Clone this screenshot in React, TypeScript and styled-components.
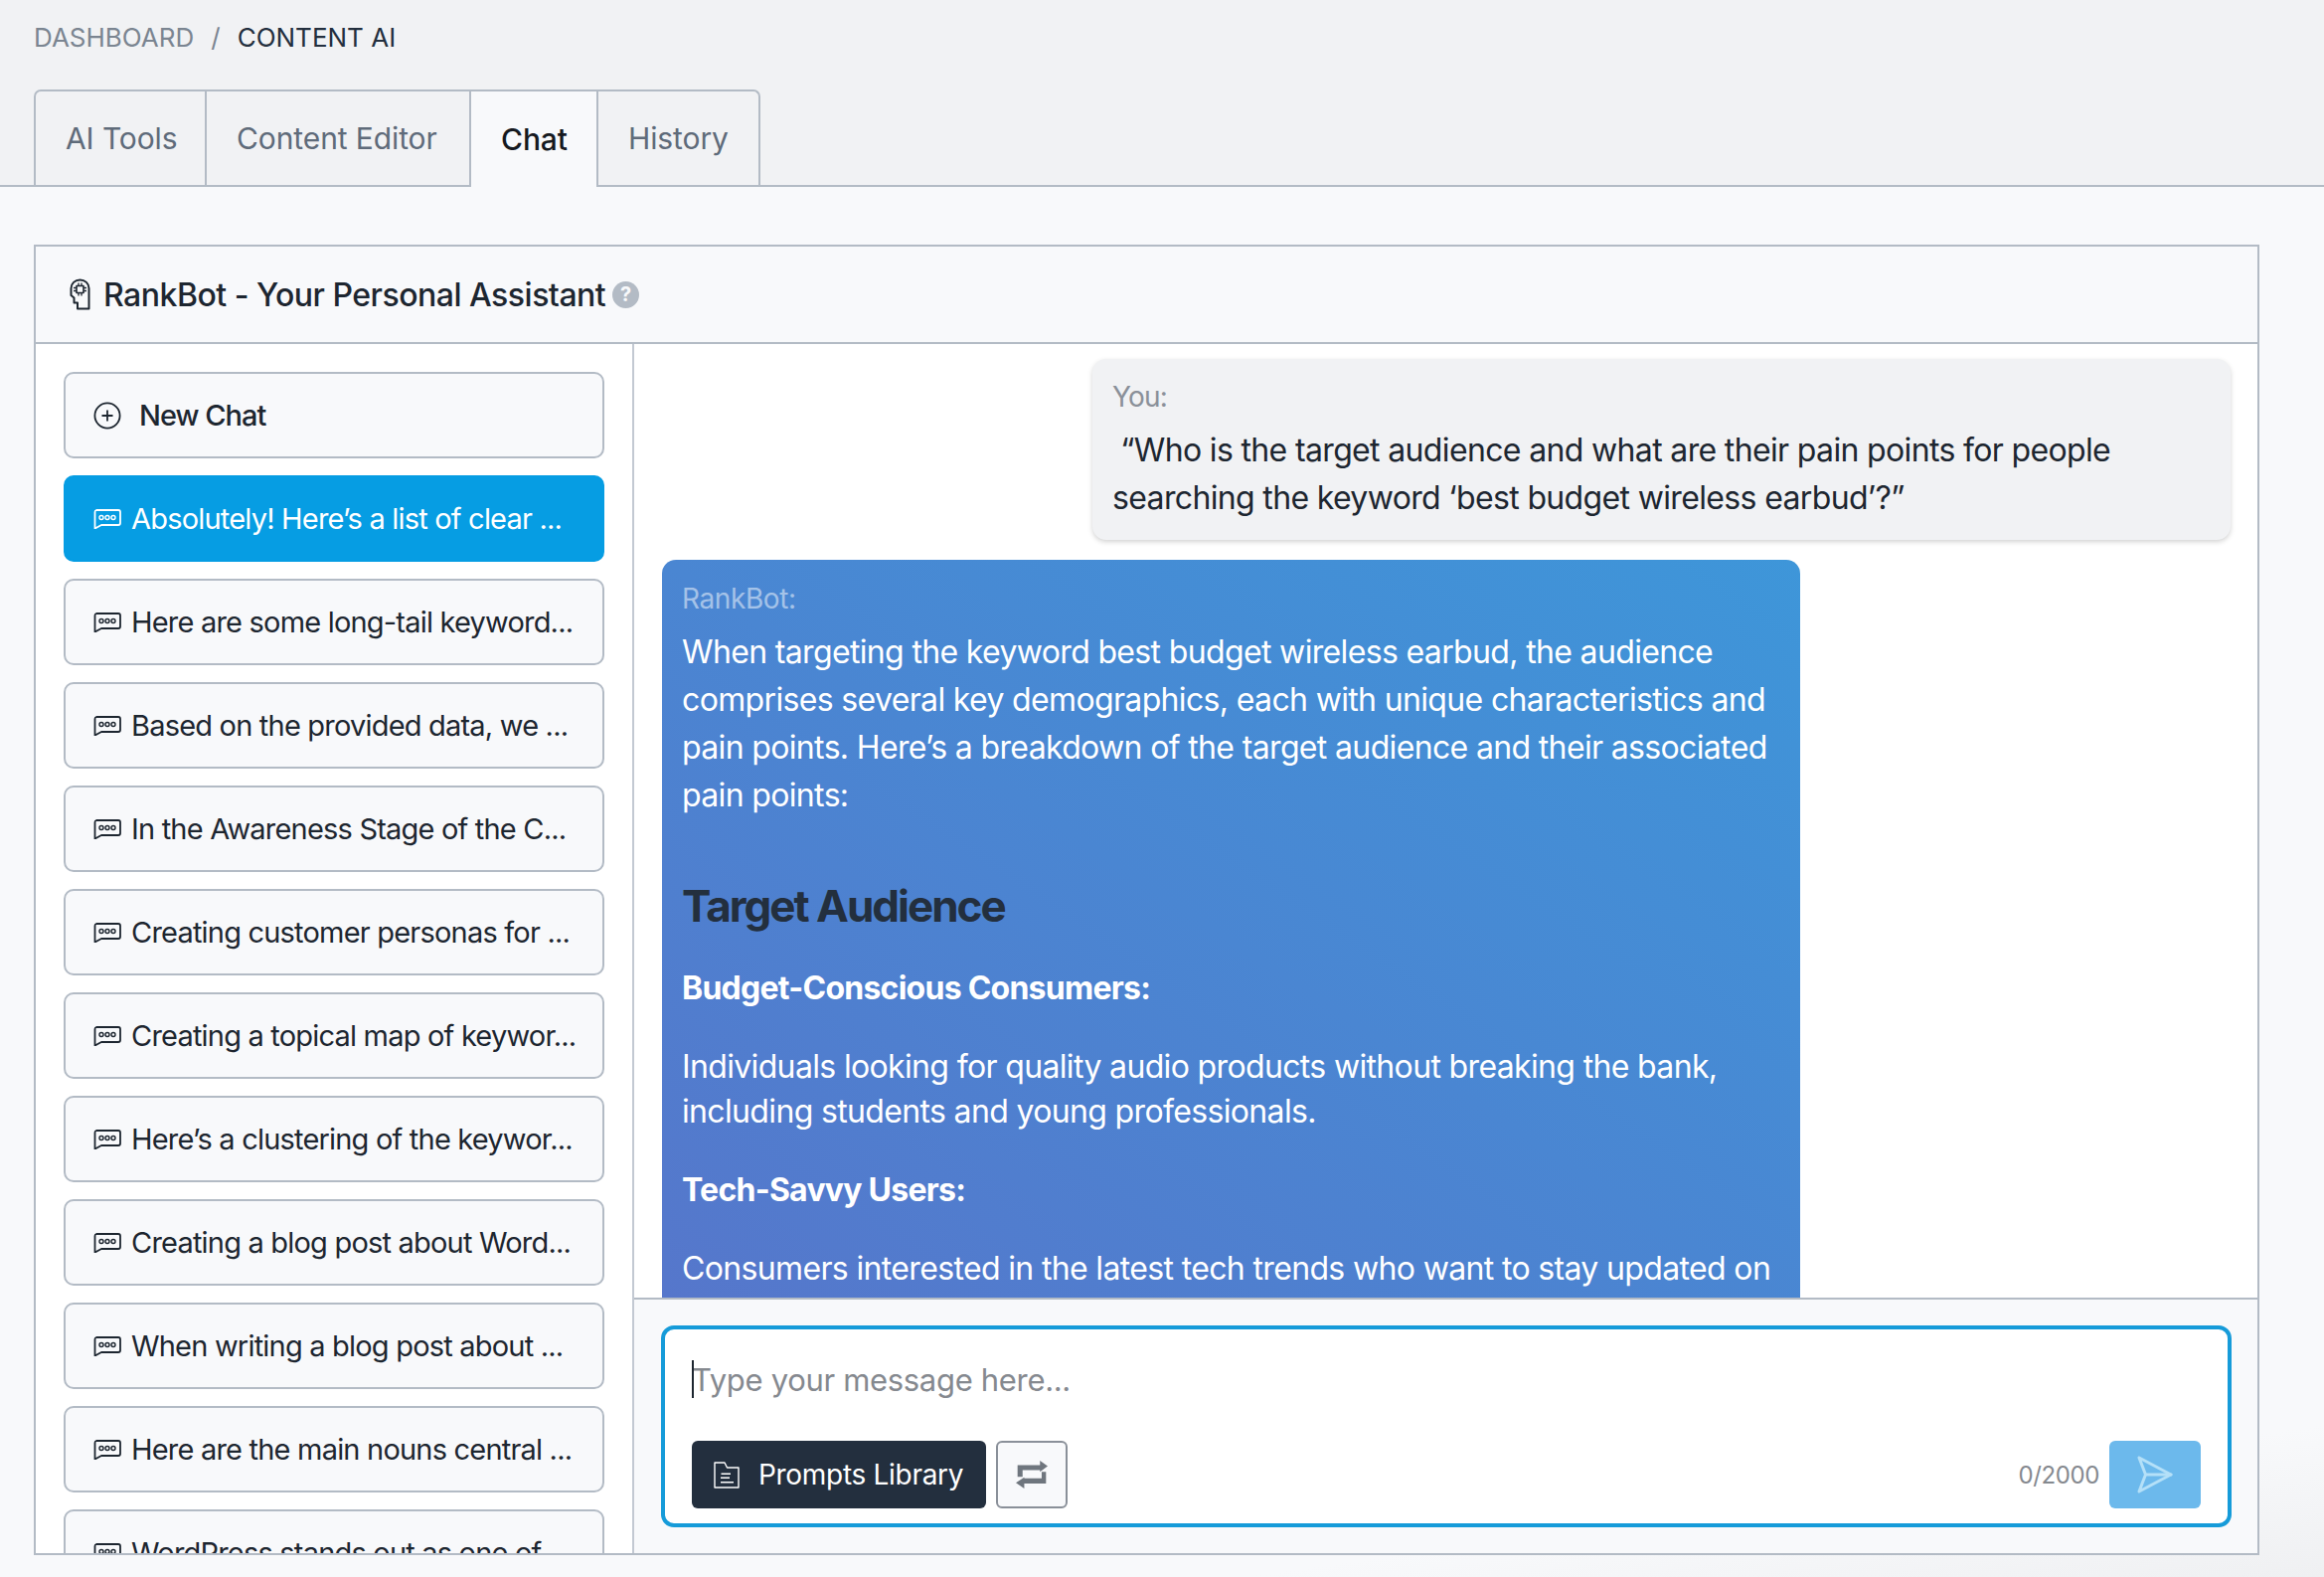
import { createGlobalStyle, styled } from 'styled-components';

const GlobalStyle = createGlobalStyle`
  html, body {
    margin: 0;
    padding: 0;
    background: #f8f9fb;
  }

  * {
    box-sizing: border-box;
  }
`;

const Page = styled.div`
  width: 2338px;
  height: 1586px;
  overflow: hidden;
  display: flex;
  flex-direction: column;
  font-family: Inter, 'Liberation Sans', sans-serif;
  font-weight: 430;
  color: #1d2630;
  background: linear-gradient(172deg, #f8f9fb 92%, #eff0f2 100%);
`;

const TopArea = styled.header`
  height: 188px;
  flex-shrink: 0;
  padding: 0 0 0 34px;
  background: #f1f2f4;
  border-bottom: 2px solid #b3bbc5;
  display: flex;
  flex-direction: column;
`;

const Breadcrumb = styled.nav`
  height: 90px;
  flex-shrink: 0;
  padding-top: 22px;
  display: flex;
  gap: 17px;
  font-size: 26px;
  line-height: 32px;
`;

const Crumb = styled.span<{ $current?: boolean }>`
  color: ${({ $current }) => ($current ? '#232f3e' : '#7b8591')};
`;

const TabRow = styled.div`
  display: flex;
  height: 96px;
  flex-shrink: 0;
`;

const Tab = styled.div<{ $active?: boolean; $first?: boolean; $last?: boolean; $width: number }>`
  position: relative;
  z-index: ${({ $active }) => ($active ? 1 : 0)};
  width: ${({ $width }) => $width}px;
  margin-left: ${({ $first }) => ($first ? '0' : '-2px')};
  height: ${({ $active }) => ($active ? '98px' : '96px')};
  padding-left: 30px;
  display: flex;
  align-items: center;
  flex-shrink: 0;
  font-size: 30px;
  font-weight: ${({ $active }) => ($active ? 500 : 430)};
  letter-spacing: -0.1px;
  color: ${({ $active }) => ($active ? '#16191f' : '#5f6b7a')};
  background: ${({ $active }) => ($active ? '#f8f9fb' : '#f1f2f4')};
  border: 2px solid #b3bbc5;
  border-bottom: none;
  border-top-left-radius: ${({ $first }) => ($first ? '7px' : '0')};
  border-top-right-radius: ${({ $last }) => ($last ? '7px' : '0')};
`;

const Content = styled.main`
  flex: 1;
  min-height: 0;
  padding: 58px 65px 22px 34px;
  display: flex;
`;

const Card = styled.section`
  flex: 1;
  min-width: 0;
  display: flex;
  flex-direction: column;
  border: 2px solid #b3bbc5;
`;

const CardHeader = styled.div`
  height: 98px;
  flex-shrink: 0;
  padding-left: 34px;
  display: flex;
  align-items: center;
  gap: 12px;
  background: #f8f9fb;
  border-bottom: 2px solid #b3bbc5;
`;

const CardTitle = styled.h2`
  margin: 0;
  font-size: 32px;
  font-weight: 500;
  letter-spacing: -0.5px;
  color: #1d2630;
`;

const HelpBadge = styled.span`
  width: 27px;
  height: 27px;
  margin-left: -5px;
  border-radius: 50%;
  background: #b3bbc5;
  color: #f8f9fb;
  font-size: 20px;
  font-weight: 700;
  display: flex;
  align-items: center;
  justify-content: center;
`;

const CardBody = styled.div`
  flex: 1;
  min-height: 0;
  display: flex;
  background: #fff;
`;

const Sidebar = styled.aside`
  width: 602px;
  flex-shrink: 0;
  padding: 28px 28px 0;
  display: flex;
  flex-direction: column;
  gap: 17px;
  overflow: hidden;
  border-right: 2px solid #c3c9d2;
`;

const ChatItem = styled.button<{ $active?: boolean }>`
  height: 87px;
  flex-shrink: 0;
  width: 100%;
  padding: 0 0 0 28px;
  display: flex;
  align-items: center;
  gap: 10px;
  font-family: inherit;
  font-size: 29px;
  font-weight: 430;
  letter-spacing: -0.8px;
  white-space: nowrap;
  text-align: left;
  color: ${({ $active }) => ($active ? '#fff' : '#1d2630')};
  background: ${({ $active }) => ($active ? '#069de3' : '#f8f9fb')};
  border: 2px solid ${({ $active }) => ($active ? '#069de3' : '#b3bbc5')};
  border-radius: 10px;
`;

const NewChatItem = styled(ChatItem)`
  gap: 18px;
  font-weight: 500;
  letter-spacing: -1px;
`;

const ChatColumn = styled.div`
  flex: 1;
  min-width: 0;
  display: flex;
  flex-direction: column;
`;

const Messages = styled.div`
  flex: 1;
  min-height: 0;
  padding: 15px 27px 0 28px;
  display: flex;
  flex-direction: column;
  gap: 20px;
  overflow: hidden;
`;

const UserBubble = styled.div`
  flex-shrink: 0;
  align-self: flex-end;
  width: 1145px;
  height: 182px;
  padding: 20px 20px 0;
  border-radius: 14px;
  background: #f1f2f4;
  box-shadow: 0 2px 5px rgba(0, 0, 0, 0.18);
`;

const BotBubble = styled.div`
  flex-shrink: 0;
  width: 1145px;
  padding: 21px 20px 30px;
  border-radius: 14px;
  background: linear-gradient(to top right, #5676cb 0%, #3e96d9 100%);
  color: #fff;
`;

const Sender = styled.div<{ $bot?: boolean }>`
  font-size: 28px;
  line-height: 36px;
  letter-spacing: ${({ $bot }) => ($bot ? '-0.4px' : '-0.8px')};
  margin-bottom: 12px;
  color: ${({ $bot }) => ($bot ? 'rgba(255, 255, 255, 0.5)' : '#8a9099')};
`;

const MessageText = styled.p<{ $tight?: boolean }>`
  margin: 0;
  font-size: 32px;
  letter-spacing: -0.65px;
  line-height: ${({ $tight }) => ($tight ? '45px' : '48px')};
`;

const AnswerHeading = styled.h3`
  margin: 60px 0 33px;
  font-size: 44px;
  letter-spacing: -2px;
  line-height: 54px;
  font-weight: 700;
  color: #232f3e;
`;

const AnswerLabel = styled.h4`
  margin: 0 0 34px;
  font-size: 32px;
  letter-spacing: -0.75px;
  line-height: 45px;
  font-weight: 700;
`;

const AnswerBlock = styled.div`
  margin-bottom: 34px;
`;

const Composer = styled.div`
  flex-shrink: 0;
  height: 257px;
  padding: 26px 26px 0 27px;
  background: #f8f9fb;
  border-top: 2px solid #b3bbc5;
`;

const InputBox = styled.div`
  position: relative;
  height: 203px;
  padding: 0 27px;
  display: flex;
  flex-direction: column;
  background: #fff;
  border: 4px solid #169bd9;
  border-radius: 13px;
`;

const PromptInput = styled.textarea`
  height: 112px;
  padding: 29px 0 0;
  border: none;
  outline: none;
  resize: none;
  font-family: inherit;
  font-size: 31px;
  letter-spacing: -0.32px;
  line-height: 44px;
  color: #1d2630;
  background: transparent;

  &::placeholder {
    color: #85898f;
  }
`;

const Caret = styled.span`
  position: absolute;
  left: 27px;
  top: 31px;
  width: 2px;
  height: 38px;
  background: #1d2630;
`;

const ComposerActions = styled.div`
  display: flex;
  align-items: center;
  gap: 10px;
`;

const LibraryButton = styled.button`
  height: 68px;
  width: 296px;
  padding: 0 0 0 22px;
  display: flex;
  align-items: center;
  gap: 19px;
  font-family: inherit;
  font-size: 28px;
  font-weight: 430;
  letter-spacing: -0.3px;
  color: #fff;
  background: #232f3e;
  border: none;
  border-radius: 6px;
`;

const SwapButton = styled.button`
  width: 72px;
  height: 68px;
  padding: 0;
  display: flex;
  align-items: center;
  justify-content: center;
  background: #f8f9fb;
  border: 2px solid #8a9099;
  border-radius: 6px;
`;

const Counter = styled.span`
  margin-left: auto;
  font-size: 24px;
  letter-spacing: -0.4px;
  color: #85898f;
`;

const SendButton = styled.button`
  width: 92px;
  height: 68px;
  padding: 0;
  display: flex;
  align-items: center;
  justify-content: center;
  background: #6cb9ec;
  border: none;
  border-radius: 6px;
`;

function BrainChipIcon() {
  return (
    <svg width="22" height="32" viewBox="0 0 22 32" fill="none" stroke="#1d2630" strokeWidth="2" strokeLinejoin="round" style={{ flexShrink: 0 }}>
      <path d="M19.5 30.5H8v-6H4.5v-5L1.5 17v-7C1.5 5 5.5 1.500 10.500 1.500s9 3.500 9 8.500z" />
      <rect x="7" y="7.500" width="7" height="7" strokeWidth="1.6" />
      <path d="M9 4.500v3M12 4.500v3M9 14.500v3M12 14.500v3M4 9.500h3M4 12.500h3M14 9.500h3M14 12.500h3" strokeWidth="1.3" />
    </svg>
  );
}

function PlusCircleIcon() {
  return (
    <svg width="28" height="28" viewBox="0 0 28 28" fill="none" stroke="#1d2630" strokeWidth="1.8" style={{ flexShrink: 0 }}>
      <circle cx="14" cy="14" r="12.6" />
      <path d="M14 8.500v11M8.500 14h11" />
    </svg>
  );
}

function ChatDotsIcon() {
  return (
    <svg width="28" height="20" viewBox="0 0 28 20" fill="none" stroke="currentColor" strokeWidth="1.8" strokeLinejoin="round" style={{ flexShrink: 0 }}>
      <path d="M3 1h22a2 2 0 0 1 2 2v11a2 2 0 0 1-2 2H8l-6.500 3.500V3A2 2 0 0 1 3 1z" />
      <circle cx="8" cy="8.500" r="2" strokeWidth="1.4" />
      <circle cx="14" cy="8.500" r="2" strokeWidth="1.4" />
      <circle cx="20" cy="8.500" r="2" strokeWidth="1.4" />
    </svg>
  );
}

function LibraryIcon() {
  return (
    <svg width="26" height="27" viewBox="0 0 26 27" fill="none" stroke="#fff" strokeWidth="1.4" strokeLinejoin="round" style={{ flexShrink: 0 }}>
      <path d="M1 1h10l2.500 5H25v20H1z" />
      <path d="M7.500 12.300H17M7 16.300h9M7 20.700h13" />
    </svg>
  );
}

function RepeatIcon() {
  return (
    <svg width="32" height="28" viewBox="0 0 95 83" fill="#6f767e">
      <path d="M5 13h67V0l23 16-23 17v-5H20v20H5z" />
      <path d="M77 33h13v35H25v15L0 66l25-16v3h52z" />
    </svg>
  );
}

function SendIcon() {
  return (
    <svg width="36" height="38" viewBox="0 0 36 38" fill="none" stroke="#b4e0f8" strokeWidth="3" strokeLinejoin="round" strokeLinecap="round">
      <path d="M2 2l32 17L2 36l6.500-17z" />
      <path d="M8.500 19H34" />
    </svg>
  );
}

const chats = [
  'Absolutely! Here’s a list of clear ...',
  'Here are some long-tail keyword...',
  'Based on the provided data, we ...',
  'In the Awareness Stage of the C...',
  'Creating customer personas for ...',
  'Creating a topical map of keywor...',
  'Here’s a clustering of the keywor...',
  'Creating a blog post about Word...',
  'When writing a blog post about ...',
  'Here are the main nouns central ...',
  'WordPress stands out as one of ...',
];

export default function App() {
  return (
    <Page>
      <GlobalStyle />
      <TopArea>
        <Breadcrumb>
          <Crumb>DASHBOARD</Crumb>
          <Crumb>/</Crumb>
          <Crumb $current>CONTENT AI</Crumb>
        </Breadcrumb>
        <TabRow>
          <Tab $first $width={174}>AI Tools</Tab>
          <Tab $width={268}>Content Editor</Tab>
          <Tab $active $width={130}>Chat</Tab>
          <Tab $last $width={165}>History</Tab>
        </TabRow>
      </TopArea>
      <Content>
        <Card>
          <CardHeader>
            <BrainChipIcon />
            <CardTitle>RankBot - Your Personal Assistant</CardTitle>
            <HelpBadge>?</HelpBadge>
          </CardHeader>
          <CardBody>
            <Sidebar>
              <NewChatItem>
                <PlusCircleIcon />
                New Chat
              </NewChatItem>
              {chats.map((title, index) => (
                <ChatItem key={title} $active={index === 0}>
                  <ChatDotsIcon />
                  {title}
                </ChatItem>
              ))}
            </Sidebar>
            <ChatColumn>
              <Messages>
                <UserBubble>
                  <Sender>You:</Sender>
                  <MessageText>
                    &nbsp;“Who is the target audience and what are their pain points for people
                    searching the keyword ‘best budget wireless earbud’?”
                  </MessageText>
                </UserBubble>
                <BotBubble>
                  <Sender $bot>RankBot:</Sender>
                  <MessageText>
                    When targeting the keyword best budget wireless earbud, the audience comprises
                    several key demographics, each with unique characteristics and pain points.
                    Here’s a breakdown of the target audience and their associated pain points:
                  </MessageText>
                  <AnswerHeading>Target Audience</AnswerHeading>
                  <AnswerLabel>Budget-Conscious Consumers:</AnswerLabel>
                  <AnswerBlock>
                    <MessageText $tight>
                      Individuals looking for quality audio products without breaking the bank,
                      including students and young professionals.
                    </MessageText>
                  </AnswerBlock>
                  <AnswerLabel>Tech-Savvy Users:</AnswerLabel>
                  <MessageText $tight>
                    Consumers interested in the latest tech trends who want to stay updated on
                  </MessageText>
                </BotBubble>
              </Messages>
              <Composer>
                <InputBox>
                  <Caret />
                  <PromptInput placeholder="Type your message here..." />
                  <ComposerActions>
                    <LibraryButton>
                      <LibraryIcon />
                      Prompts Library
                    </LibraryButton>
                    <SwapButton>
                      <RepeatIcon />
                    </SwapButton>
                    <Counter>0/2000</Counter>
                    <SendButton>
                      <SendIcon />
                    </SendButton>
                  </ComposerActions>
                </InputBox>
              </Composer>
            </ChatColumn>
          </CardBody>
        </Card>
      </Content>
    </Page>
  );
}
